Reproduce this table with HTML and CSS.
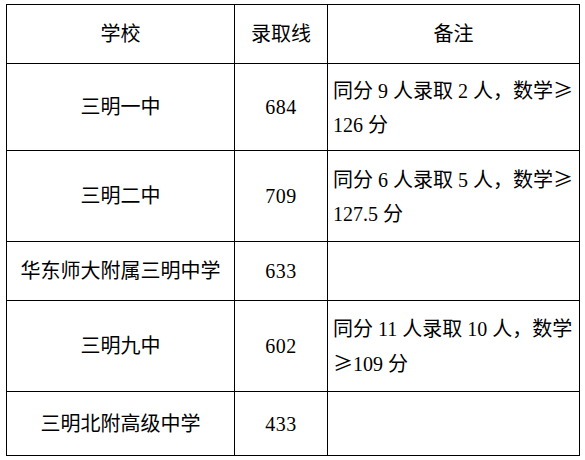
FILE: index.html
```html
<!DOCTYPE html>
<html lang="zh-CN">
<head>
<meta charset="utf-8">
<title>录取线</title>
<link rel="stylesheet" href="styles.css">
</head>
<body>
<table class="score-table">
  <colgroup>
    <col class="col-school">
    <col class="col-score">
    <col class="col-note">
  </colgroup>
  <tr class="row-head">
    <td class="c">学校</td>
    <td class="c">录取线</td>
    <td class="c">备注</td>
  </tr>
  <tr class="row-a">
    <td class="c">三明一中</td>
    <td class="c num">684</td>
    <td class="note">同分 9 人录取 2 人，数学<span class="sym">≥</span><br>126 分</td>
  </tr>
  <tr class="row-b">
    <td class="c">三明二中</td>
    <td class="c num">709</td>
    <td class="note">同分 6 人录取 5 人，数学<span class="sym">≥</span><br>127.5 分</td>
  </tr>
  <tr class="row-c">
    <td class="c">华东师大附属三明中学</td>
    <td class="c num">633</td>
    <td class="note"></td>
  </tr>
  <tr class="row-b">
    <td class="c">三明九中</td>
    <td class="c num">602</td>
    <td class="note">同分 11 人录取 10 人，数学<br><span class="sym">≥</span>109 分</td>
  </tr>
  <tr class="row-d">
    <td class="c">三明北附高级中学</td>
    <td class="c num">433</td>
    <td class="note"></td>
  </tr>
</table>
</body>
</html>
```

FILE: styles.css
```css
html, body {
  margin: 0;
  padding: 0;
  background: #ffffff;
}

body {
  padding: 4px 0 0 6px;
  font-family: "Liberation Serif", "Noto Sans CJK SC", serif;
  font-size: 20px;
  color: #000000;
}

.score-table {
  border-collapse: collapse;
  table-layout: fixed;
  width: 573px;
}

.col-school { width: 228px; }
.col-score { width: 93px; }
.col-note { width: 252px; }

.score-table td {
  border: 1px solid #000000;
  padding: 0;
  vertical-align: middle;
  line-height: 24px;
}

.row-head { height: 59px; }
.row-a { height: 87px; }
.row-b { height: 91px; }
.row-c { height: 59px; }
.row-d { height: 64px; }

.c {
  text-align: center;
  white-space: nowrap;
}

.num {
  letter-spacing: 0.5px;
}

.note {
  text-align: left;
  padding-left: 5px !important;
  white-space: nowrap;
  line-height: 34px !important;
}

.sym {
  font-family: "Noto Sans CJK SC", sans-serif;
}
```
